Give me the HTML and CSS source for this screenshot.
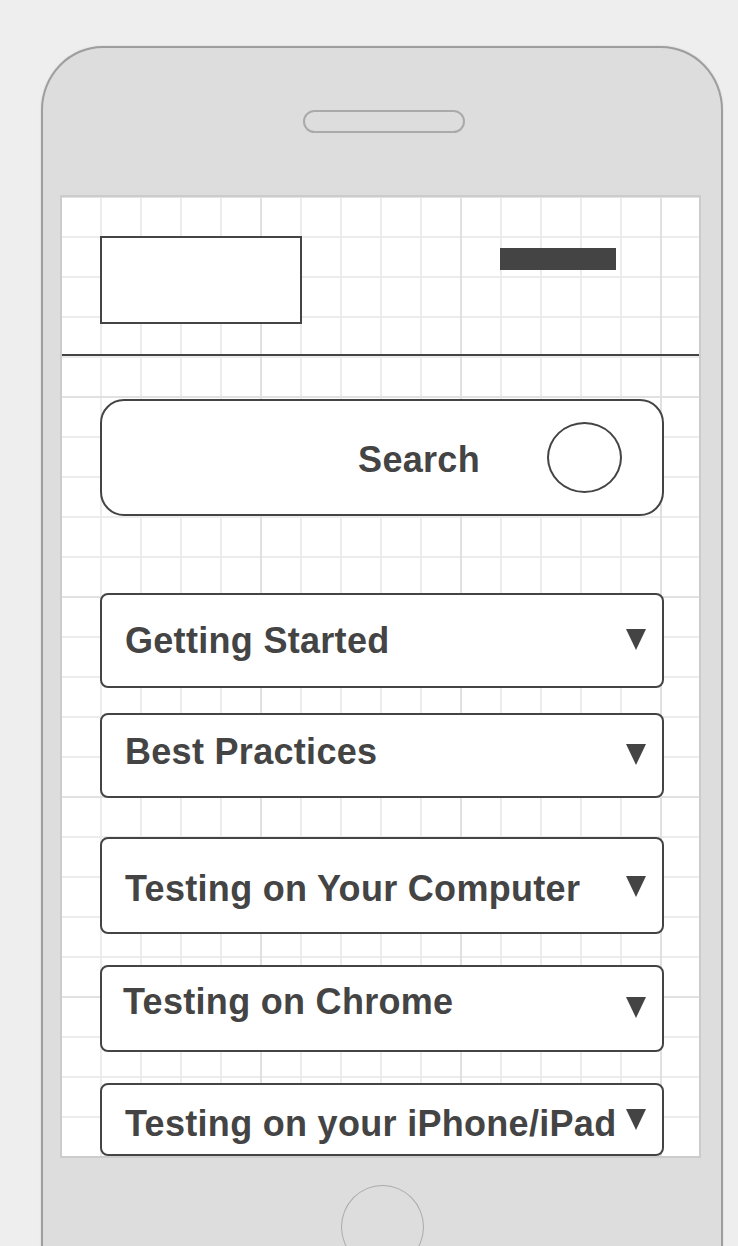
FILE: index.html
```html
<!DOCTYPE html>
<html lang="en">
<head>
<meta charset="utf-8">
<title>Mobile wireframe</title>
<link rel="stylesheet" href="styles.css">
</head>
<body>
<div class="phone">
  <div class="speaker"></div>
  <div class="screen">
    <header class="topbar">
      <div class="logo"></div>
      <div class="menu-bar"></div>
    </header>
    <div class="search">
      <span class="search-label">Search</span>
      <span class="search-button"></span>
    </div>
    <ul class="sections">
      <li class="section section--started">
        <span class="section-title">Getting Started</span>
        <svg class="caret" width="20" height="21" viewBox="0 0 20 21"><polygon points="0,0 20,0 10,21"/></svg>
      </li>
      <li class="section section--practices">
        <span class="section-title">Best Practices</span>
        <svg class="caret" width="20" height="21" viewBox="0 0 20 21"><polygon points="0,0 20,0 10,21"/></svg>
      </li>
      <li class="section section--computer">
        <span class="section-title">Testing on Your Computer</span>
        <svg class="caret" width="20" height="21" viewBox="0 0 20 21"><polygon points="0,0 20,0 10,21"/></svg>
      </li>
      <li class="section section--chrome">
        <span class="section-title">Testing on Chrome</span>
        <svg class="caret" width="20" height="21" viewBox="0 0 20 21"><polygon points="0,0 20,0 10,21"/></svg>
      </li>
      <li class="section section--iphone">
        <span class="section-title">Testing on your iPhone/iPad</span>
        <svg class="caret" width="20" height="21" viewBox="0 0 20 21"><polygon points="0,0 20,0 10,21"/></svg>
      </li>
    </ul>
  </div>
  <div class="home-button"></div>
</div>
</body>
</html>
```

FILE: styles.css
```css
html, body {
  margin: 0;
  padding: 0;
  height: 1246px;
  overflow: hidden;
  background: #eeeeee;
}

body {
  font-family: "Liberation Sans", Arial, sans-serif;
  color: #444444;
}

.phone {
  box-sizing: border-box;
  margin: 46px 0 0 41px;
  width: 682px;
  height: 1320px;
  padding-left: 17px;
  background: #dddddd;
  border: 2px solid #9e9e9e;
  border-radius: 62px 62px 0 0 / 64px 64px 0 0;
  box-shadow: 0 0 2px rgba(0, 0, 0, 0.12);
  display: flex;
  flex-direction: column;
  align-items: flex-start;
}

.speaker {
  box-sizing: border-box;
  align-self: center;
  margin-top: 62px;
  margin-left: -13px;
  width: 162px;
  height: 23px;
  border: 2px solid #aaaaaa;
  border-radius: 12px;
}

.screen {
  box-sizing: border-box;
  margin-top: 62px;
  width: 641px;
  height: 963px;
  border: 2px solid #cccccc;
  overflow: hidden;
  background-color: #ffffff;
  background-image:
    linear-gradient(to right, #e1e1e1 2px, transparent 2px),
    linear-gradient(to bottom, #e1e1e1 2px, transparent 2px),
    linear-gradient(to right, #ececec 2px, transparent 2px),
    linear-gradient(to bottom, #ececec 2px, transparent 2px);
  background-size: 200px 200px, 200px 200px, 40px 40px, 40px 40px;
  background-position: 198px 0, 0 199px, 38px 0, 0 39px;
}

.topbar {
  box-sizing: border-box;
  height: 159px;
  padding: 39px 83px 0 38px;
  border-bottom: 2px solid #444444;
  display: flex;
  align-items: flex-start;
}

.logo {
  box-sizing: border-box;
  width: 202px;
  height: 88px;
  border: 2px solid #444444;
  background: #ffffff;
}

.menu-bar {
  margin-left: auto;
  margin-top: 12px;
  width: 116px;
  height: 22px;
  background: #444444;
}

.search {
  box-sizing: border-box;
  margin: 43px 0 0 38px;
  width: 564px;
  height: 117px;
  padding-right: 40px;
  border: 2px solid #444444;
  border-radius: 24px;
  background: #ffffff;
  display: flex;
  justify-content: flex-end;
  align-items: center;
}

.search-label {
  font-size: 36px;
  font-weight: bold;
  line-height: 36px;
  letter-spacing: 0.3px;
  margin-top: 4px;
}

.search-button {
  box-sizing: border-box;
  margin-left: 67px;
  width: 75px;
  height: 71px;
  border: 2px solid #444444;
  border-radius: 50%;
}

.sections {
  list-style: none;
  margin: 77px 0 0 38px;
  padding: 0;
  width: 564px;
}

.section {
  box-sizing: border-box;
  border: 2px solid #444444;
  border-radius: 8px;
  background: #ffffff;
  padding-left: 23px;
  padding-right: 16px;
  display: flex;
  align-items: flex-start;
}

.section-title {
  flex: 1;
  white-space: nowrap;
  font-size: 36px;
  font-weight: bold;
  line-height: 36px;
  letter-spacing: 0.3px;
}

.caret {
  flex: none;
  fill: #444444;
}

.section--started { height: 95px; padding-top: 28px; }
.section--started .caret { margin-top: 6px; }

.section--practices { margin-top: 25px; height: 85px; padding-top: 19px; }
.section--practices .caret { margin-top: 10px; }

.section--computer { margin-top: 39px; height: 97px; padding-top: 32px; }
.section--computer .caret { margin-top: 5px; }

.section--chrome { margin-top: 31px; height: 87px; padding-top: 17px; padding-left: 21px; }
.section--chrome .caret { margin-top: 13px; }

.section--iphone { margin-top: 31px; height: 73px; padding-top: 21px; }
.section--iphone .caret { margin-top: 3px; }

.home-button {
  box-sizing: border-box;
  align-self: center;
  margin-top: 27px;
  margin-left: -17px;
  width: 83px;
  height: 84px;
  border: 1.5px solid #aaaaaa;
  border-radius: 50%;
}
```
